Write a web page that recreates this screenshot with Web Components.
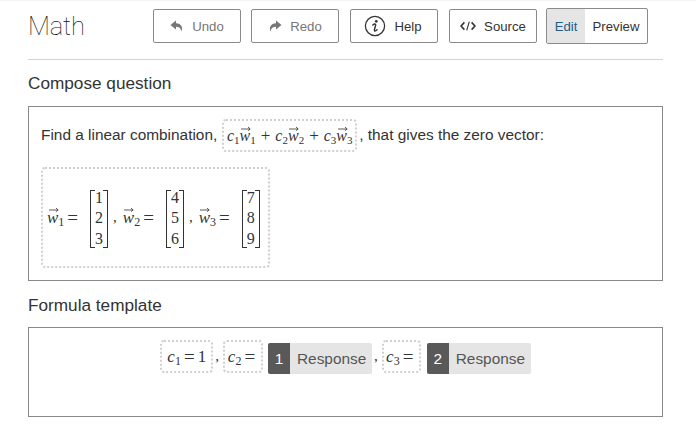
<!DOCTYPE html>
<html>
<head>
<meta charset="utf-8">
<style>
html, body { margin: 0; padding: 0; background: #fff; }
body { font-family: "Liberation Sans", Arial, sans-serif; color: #333; width: 696px; height: 438px; overflow: hidden; border-top: 1px solid #f4f4f4; box-sizing: border-box; }
</style>
</head>
<body>
<editor-page>
  <editor-header slot="header" title="Math">
    <tool-button disabled icon="undo" style="margin-right:10px">Undo</tool-button>
    <tool-button disabled icon="redo" style="margin-right:11px">Redo</tool-button>
    <tool-button icon="help" style="margin-right:11px;padding-right:2px">Help</tool-button>
    <tool-button icon="source" style="margin-right:9px">Source</tool-button>
    <mode-toggle></mode-toggle>
  </editor-header>

  <editor-section heading="Compose question" height="175" pad="12px 12px 0" style="--heading-pad:13px;--heading-height:33px">
    <div style="display:flex;align-items:center;box-sizing:border-box;height:33px;padding-bottom:2px;font-size:15.4px;white-space:nowrap">
      Find a linear combination,
      <math-chip style="margin:0 2px -2px 5px;height:33px;width:135px"><math-term c="1"></math-term><math-op>+</math-op><math-term c="2"></math-term><math-op>+</math-op><math-term c="3"></math-term></math-chip>, that gives the zero vector:
    </div>
    <math-chip style="display:flex;width:229px;height:101px;margin-top:15px;padding-left:4px;justify-content:flex-start;--eq-margin:0 12px 0 3px;--comma-margin:0 6px 0 5px;--math-size:17px;--sub-size:12px">
      <math-vec n="1"></math-vec><math-op eq>=</math-op><math-matrix values="1,2,3"></math-matrix><math-comma></math-comma>
      <math-vec n="2"></math-vec><math-op eq>=</math-op><math-matrix values="4,5,6"></math-matrix><math-comma></math-comma>
      <math-vec n="3"></math-vec><math-op eq>=</math-op><math-matrix values="7,8,9"></math-matrix>
    </math-chip>
  </editor-section>

  <editor-section heading="Formula template" height="90" pad="12px 0 0" style="--heading-pad:14px;--heading-height:32px">
    <div style="display:flex;align-items:center;justify-content:center;height:33px;white-space:nowrap;--eq-margin:0 3px;--comma-margin:0 4px 0 2px;--math-size:17px;--sub-size:12px">
      <math-chip style="height:33px;width:53px"><math-coef n="1"></math-coef><math-op eq>=</math-op><span style="font-size:17px">1</span></math-chip>
      <math-comma></math-comma>
      <math-chip style="height:33px;width:40px;margin-right:5px"><math-coef n="2"></math-coef><math-op eq>=</math-op></math-chip>
      <response-blank number="1"></response-blank>
      <math-comma style="--comma-margin:0 4px 0 2px"></math-comma>
      <math-chip style="height:33px;width:39px;margin-right:6px"><math-coef n="3"></math-coef><math-op eq>=</math-op></math-chip>
      <response-blank number="2"></response-blank>
    </div>
  </editor-section>
</editor-page>

<script>
const ICONS = {
  undo: '<svg width="14" height="12" viewBox="0 0 14 12"><path fill="#777" d="M6 0.5 L0.5 5 L6 9.5 V6.8 C9 6.8 10.8 8 11.6 11.5 C13 7.5 11.5 3.4 6 3.2 Z"/></svg>',
  redo: '<svg width="14" height="12" viewBox="0 0 14 12"><path fill="#777" d="M8 0.5 L13.5 5 L8 9.5 V6.8 C5 6.8 3.2 8 2.4 11.5 C1 7.5 2.5 3.4 8 3.2 Z"/></svg>',
  help: '<svg width="22" height="22" viewBox="0 0 22 22"><circle cx="11" cy="11" r="9.6" fill="none" stroke="#333" stroke-width="1.3"/><circle cx="12.3" cy="6.3" r="1.35" fill="#333"/><path fill="none" stroke="#333" stroke-width="1.5" stroke-linecap="round" d="M8.8 10 C9.8 9.2 11 8.9 11.6 9.4 C11.9 9.8 11.6 10.8 11 12.6 C10.5 14.2 10 15.4 10.5 15.8 C11 16.1 12.2 15.5 13 14.7"/></svg>',
  source: '<svg width="16" height="10" viewBox="0 0 16 10"><path fill="none" stroke="#333" stroke-width="1.6" d="M4.4 1.4 L1 5 L4.4 8.6 M11.6 1.4 L15 5 L11.6 8.6"/><path fill="none" stroke="#333" stroke-width="1.1" d="M9.3 0.6 L6.7 9.4"/></svg>'
};

class EditorPage extends HTMLElement {
  constructor() {
    super();
    this.attachShadow({ mode: 'open' });
    this.shadowRoot.innerHTML = `
      <style>
        :host { display: block; padding: 7px 33px 0 28px; }
      </style>
      <slot name="header"></slot>
      <slot></slot>
    `;
  }
}

class EditorHeader extends HTMLElement {
  constructor() {
    super();
    this.attachShadow({ mode: 'open' });
    this.shadowRoot.innerHTML = `
      <style>
        :host { display: block; border-bottom: 1px solid #d3d3d3; height: 51px; }
        .row { display: flex; align-items: center; height: 36px; }
        h1 { margin: 0; width: 125px; font: 100 25.5px Roboto, sans-serif; color: #111; letter-spacing: -0.1px; }
        .tools { display: flex; align-items: center; }
      </style>
      <div class="row">
        <h1>${this.getAttribute('title')}</h1>
        <div class="tools"><slot></slot></div>
      </div>
    `;
  }
}

class ToolButton extends HTMLElement {
  constructor() {
    super();
    this.attachShadow({ mode: 'open' });
    const off = this.hasAttribute('disabled');
    this.shadowRoot.innerHTML = `
      <style>
        :host { display: flex; align-items: center; justify-content: center; gap: 8px; width: 88px; height: 34px; box-sizing: border-box;
          border: 1px solid #8a8a8a; border-radius: 2px; font-size: 13.2px; color: ${off ? '#777' : '#333'}; }
        span { display: flex; }
      </style>
      <span>${ICONS[this.getAttribute('icon')]}</span><slot></slot>
    `;
  }
}

class ModeToggle extends HTMLElement {
  constructor() {
    super();
    this.attachShadow({ mode: 'open' });
    this.shadowRoot.innerHTML = `
      <style>
        :host { display: flex; height: 36px; width: 102px; box-sizing: border-box; border: 1px solid #8a8a8a; border-radius: 2px; font-size: 13.2px; overflow: hidden; }
        div { display: flex; align-items: center; justify-content: center; }
        .edit { width: 38px; background: #e5e5e5; color: #1f5c8a; }
        .preview { flex: 1; color: #333; }
      </style>
      <div class="edit">Edit</div><div class="preview">Preview</div>
    `;
  }
}

class EditorSection extends HTMLElement {
  constructor() {
    super();
    this.attachShadow({ mode: 'open' });
    this.shadowRoot.innerHTML = `
      <style>
        :host { display: block; }
        h2 { margin: 0; font: 400 17.2px/20px "Liberation Sans", sans-serif; color: #333; padding-top: var(--heading-pad, 14px); height: var(--heading-height, 32px); }
        .box { box-sizing: border-box; height: ${this.getAttribute('height')}px; border: 1px solid #888; padding: ${this.getAttribute('pad')}; }
      </style>
      <h2>${this.getAttribute('heading')}</h2>
      <div class="box"><slot></slot></div>
    `;
  }
}

class MathChip extends HTMLElement {
  constructor() {
    super();
    this.attachShadow({ mode: 'open' });
    this.shadowRoot.innerHTML = `
      <style>
        :host { display: inline-flex; align-items: center; justify-content: center; box-sizing: border-box; flex: none;
          border: 2px dotted #d0d0d0; border-radius: 4px; font: 16px "Liberation Serif", serif; color: #333; }
      </style>
      <slot></slot>
    `;
  }
}

class MathVec extends HTMLElement {
  constructor() {
    super();
    this.attachShadow({ mode: 'open' });
    this.shadowRoot.innerHTML = `
      <style>
        :host { display: inline-block; position: relative; font: italic var(--math-size, 16px) "Liberation Serif", serif; color: #333; }
        sub { font: normal var(--sub-size, 11px) "Liberation Serif", serif; vertical-align: -3px; line-height: 0; }
        svg { position: absolute; left: 1.5px; top: -1px; }
      </style>
      <svg width="10" height="5" viewBox="0 0 10 5"><path fill="none" stroke="#333" stroke-width="0.8" d="M0 3 H9 M7 1 L9.2 3 L7 4.6"/></svg>w<sub>${this.getAttribute('n')}</sub>
    `;
  }
}

class MathCoef extends HTMLElement {
  constructor() {
    super();
    this.attachShadow({ mode: 'open' });
    this.shadowRoot.innerHTML = `
      <style>
        :host { display: inline-block; font: italic var(--math-size, 16px) "Liberation Serif", serif; color: #333; }
        sub { font: normal var(--sub-size, 11px) "Liberation Serif", serif; vertical-align: -3px; line-height: 0; }
      </style>
      c<sub>${this.getAttribute('n')}</sub>
    `;
  }
}

class MathTerm extends HTMLElement {
  constructor() {
    super();
    this.attachShadow({ mode: 'open' });
    const c = this.getAttribute('c');
    this.shadowRoot.innerHTML = `
      <style>:host { display: inline-flex; align-items: baseline; }</style>
      <math-coef n="${c}"></math-coef><math-vec n="${c}"></math-vec>
    `;
  }
}

class MathOp extends HTMLElement {
  constructor() {
    super();
    this.attachShadow({ mode: 'open' });
    const eq = this.hasAttribute('eq');
    this.shadowRoot.innerHTML = `
      <style>:host { display: inline-block; margin: ${eq ? 'var(--eq-margin)' : '0 5px'}; font: ${eq ? 19 : 17}px "Liberation Serif", serif; color: #333; }</style>
      <slot></slot>
    `;
  }
}

class MathComma extends HTMLElement {
  constructor() {
    super();
    this.attachShadow({ mode: 'open' });
    this.shadowRoot.innerHTML = `
      <style>:host { display: inline-block; margin: var(--comma-margin, 0 8px 0 5px); font: 15px "Liberation Serif", serif; color: #333; }</style>
      ,
    `;
  }
}

class MathMatrix extends HTMLElement {
  constructor() {
    super();
    this.attachShadow({ mode: 'open' });
    const cells = this.getAttribute('values').split(',').map(v => `<div>${v}</div>`).join('');
    this.shadowRoot.innerHTML = `
      <style>
        :host { display: inline-block; position: relative; width: 18px; height: 58px; margin-top: 2px; font: 16px/20px "Liberation Serif", serif; color: #333; text-align: center; }
        :host::before, :host::after { content: ""; position: absolute; top: 0; bottom: 0; width: 4px; border: 1px solid #333; }
        :host::before { left: 0; border-right: 0; }
        :host::after { right: 0; border-left: 0; }
        div { height: 20.5px; }
        div:first-of-type { margin-top: -2px; }
      </style>
      ${cells}
    `;
  }
}

class ResponseBlank extends HTMLElement {
  constructor() {
    super();
    this.attachShadow({ mode: 'open' });
    this.shadowRoot.innerHTML = `
      <style>
        :host { display: inline-flex; flex: none; height: 31px; width: 104px; margin-top: 4px; border-radius: 2px; overflow: hidden; font-size: 15.4px; background: #e5e5e5; color: #555; }
        b { font-weight: 400; width: 22px; background: #595959; color: #fff; display: flex; align-items: center; justify-content: center; }
        span { display: flex; align-items: center; padding: 0 0 0 7px; }
      </style>
      <b>${this.getAttribute('number')}</b><span>Response</span>
    `;
  }
}

customElements.define('editor-page', EditorPage);
customElements.define('editor-header', EditorHeader);
customElements.define('tool-button', ToolButton);
customElements.define('mode-toggle', ModeToggle);
customElements.define('editor-section', EditorSection);
customElements.define('math-chip', MathChip);
customElements.define('math-vec', MathVec);
customElements.define('math-coef', MathCoef);
customElements.define('math-term', MathTerm);
customElements.define('math-op', MathOp);
customElements.define('math-comma', MathComma);
customElements.define('math-matrix', MathMatrix);
customElements.define('response-blank', ResponseBlank);
</script>
</body>
</html>
